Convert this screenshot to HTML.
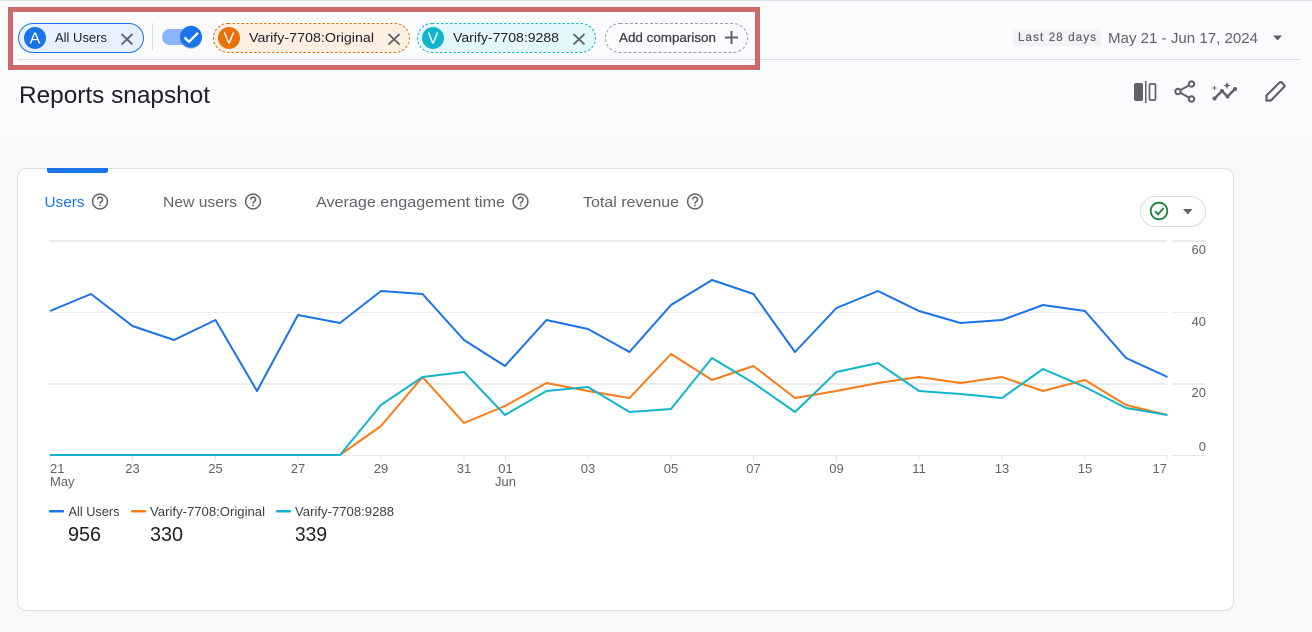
<!DOCTYPE html>
<html><head><meta charset="utf-8"><title>Reports snapshot</title>
<style>
html,body{margin:0;padding:0;width:1312px;height:632px;overflow:hidden;background:#f8f9fb}
svg{display:block;position:absolute;left:0;top:0}
text{font-family:"Liberation Sans",sans-serif}
.ax{fill:#5f6368}
.ax text{font-size:13px}
.lg{font-size:12.500px;fill:#3c4043}
.num{font-size:20px;fill:#202124}
.tab{font-size:15px;fill:#5f6368}
.chip{font-size:13px;fill:#202124}
.av{font-size:16px;fill:#fff;text-anchor:middle}
</style></head><body>
<svg width="1312" height="632" viewBox="0 0 1312 632" xmlns="http://www.w3.org/2000/svg">
<defs><linearGradient id="bg" x1="0" y1="0" x2="0" y2="1"><stop offset="0" stop-color="#fafbfd"/><stop offset="0.2" stop-color="#fafbfd"/><stop offset="0.26" stop-color="#f7f8fa"/><stop offset="1" stop-color="#f7f8fa"/></linearGradient></defs>
<rect width="1312" height="632" fill="url(#bg)"/>
<rect x="0" y="0" width="1312" height="1" fill="#dfe1e5"/>
<line x1="18" y1="59.500" x2="1300" y2="59.500" stroke="#dadce0"/>
<rect x="10.500" y="9.500" width="747" height="58" fill="none" stroke="#cc6a6a" stroke-width="5"/>

<!-- All Users chip -->
<rect x="18.500" y="23.500" width="125" height="29" rx="14.500" fill="#e8f0fe" stroke="#1a73e8"/>
<circle cx="35" cy="38" r="11" fill="#1a73e8"/>
<text class="av" x="35" y="43.500">A</text>
<text class="chip" x="55" y="42" textLength="52" lengthAdjust="spacingAndGlyphs">All Users</text>
<path d="M121.500 34L132.500 44.500M132.500 34L121.500 44.500" stroke="#5f6368" stroke-width="1.900" fill="none"/>
<line x1="152.500" y1="23" x2="152.500" y2="50" stroke="#dadce0"/>
<!-- toggle -->
<rect x="162" y="29" width="26" height="16" rx="8" fill="#8ab4f8"/>
<circle cx="191" cy="38" r="11" fill="#000" opacity=".18"/>
<circle cx="191" cy="36.800" r="11" fill="#1a73e8"/>
<path d="M184.500 37.500L189 41.800L198 32.800" stroke="#fff" stroke-width="2.300" fill="none"/>
<!-- Original chip -->
<rect x="213.500" y="23.500" width="196" height="29" rx="14.500" fill="#feefe3" stroke="#e8710a" stroke-dasharray="2.500 2"/>
<circle cx="229" cy="38" r="11" fill="#e8710a"/>
<text class="av" x="229" y="43.500">V</text>
<text class="chip" x="249" y="42" textLength="125" lengthAdjust="spacingAndGlyphs">Varify-7708:Original</text>
<path d="M388.500 34L399.500 44.500M399.500 34L388.500 44.500" stroke="#5f6368" stroke-width="1.900" fill="none"/>
<!-- 9288 chip -->
<rect x="417.500" y="23.500" width="178" height="29" rx="14.500" fill="#e4f7fb" stroke="#12b5cb" stroke-dasharray="2.500 2"/>
<circle cx="433" cy="38" r="11" fill="#12b5cb"/>
<text class="av" x="433" y="43.500">V</text>
<text class="chip" x="453" y="42" textLength="106" lengthAdjust="spacingAndGlyphs">Varify-7708:9288</text>
<path d="M573.500 34L584.500 44.500M584.500 34L573.500 44.500" stroke="#5f6368" stroke-width="1.900" fill="none"/>
<!-- add comparison -->
<rect x="605.500" y="23.500" width="142" height="29" rx="14.500" fill="none" stroke="#9aa0a6" stroke-dasharray="3 2"/>
<text class="chip" x="619" y="42" style="font-size:13px;fill:#3c4043;stroke:#3c4043;stroke-width:.25" textLength="97" lengthAdjust="spacingAndGlyphs">Add comparison</text>
<path d="M731.500 31V44M725 37.500H738" stroke="#5f6368" stroke-width="2" fill="none"/>

<!-- date -->
<rect x="1013" y="29" width="88" height="17" fill="#f1f3f4"/>
<text x="1018" y="41" style="font-size:11.500px;fill:#5f6368;stroke:#5f6368;stroke-width:.2" textLength="78" lengthAdjust="spacing">Last 28 days</text>
<text x="1108" y="43" style="font-size:15px;fill:#5f6368" textLength="150" lengthAdjust="spacingAndGlyphs">May 21 - Jun 17, 2024</text>
<path d="M1273 35.500H1282L1277.500 40.500Z" fill="#5f6368"/>

<text x="19" y="103" style="font-size:24px;fill:#202124" textLength="191" lengthAdjust="spacingAndGlyphs">Reports snapshot</text>

<!-- top right icons -->
<rect x="1134" y="83" width="9" height="18" rx="2" fill="#5f6368"/>
<rect x="1145" y="81" width="1.500" height="22" fill="#5f6368"/>
<rect x="1149.500" y="84" width="6" height="16" rx="1" fill="none" stroke="#5f6368" stroke-width="1.700"/>
<path d="M1178 91.500L1191.500 84M1178 91.500L1191.500 99" stroke="#5f6368" stroke-width="2" fill="none"/>
<circle cx="1178" cy="91.500" r="2.700" fill="#f9fafc" stroke="#5f6368" stroke-width="2.200"/>
<circle cx="1191.500" cy="84" r="2.700" fill="#f9fafc" stroke="#5f6368" stroke-width="2.200"/>
<circle cx="1191.500" cy="99" r="2.700" fill="#f9fafc" stroke="#5f6368" stroke-width="2.200"/>
<path d="M1214.500 98.500L1222 91L1227.500 96.500L1235 89" stroke="#5f6368" stroke-width="2.400" fill="none"/>
<circle cx="1214.500" cy="98.500" r="2" fill="#5f6368"/><circle cx="1222" cy="91" r="2" fill="#5f6368"/><circle cx="1227.500" cy="96.500" r="2" fill="#5f6368"/><circle cx="1235" cy="89" r="2" fill="#5f6368"/>
<path d="M1227 82L1228 84.500L1230.500 85.500L1228 86.500L1227 89L1226 86.500L1223.500 85.500L1226 84.500Z" fill="#5f6368"/>
<path d="M1214.500 86V90M1212.500 88H1216.500" stroke="#5f6368" stroke-width=".9" fill="none"/>
<path d="M1266.500 100.500V95.500L1279.500 82.500Q1280.500 81.500 1281.800 82.500L1284 84.800Q1285 86 1284 87L1271 100.500Z" fill="none" stroke="#5f6368" stroke-width="2.200"/>

<!-- card -->
<rect x="17.500" y="168.500" width="1216" height="442" rx="9" fill="#fff" stroke="#dadce0"/>
<path d="M47 168H108V170.500Q108 173 105.500 173H49.500Q47 173 47 170.500Z" fill="#1a73e8"/>
<text class="tab" x="44.500" y="207" style="fill:#1a73e8" textLength="40" lengthAdjust="spacingAndGlyphs">Users</text>
<text class="tab" x="163" y="207" textLength="74" lengthAdjust="spacingAndGlyphs">New users</text>
<text class="tab" x="316" y="207" textLength="189" lengthAdjust="spacingAndGlyphs">Average engagement time</text>
<text class="tab" x="583" y="207" textLength="96" lengthAdjust="spacingAndGlyphs">Total revenue</text>
<g fill="none" stroke="#5f6368" stroke-width="1.500">
<circle cx="100" cy="201.500" r="7.400"/><circle cx="253" cy="201.500" r="7.400"/><circle cx="520.500" cy="201.500" r="7.400"/><circle cx="695" cy="201.500" r="7.400"/>
<path d="M97.700 199.500A2.400 2.400 0 1 1 101.300 201.600C100.300 202.200 100 202.700 100 203.800"/>
<path d="M250.700 199.500A2.400 2.400 0 1 1 254.300 201.600C253.300 202.200 253 202.700 253 203.800"/>
<path d="M518.200 199.500A2.400 2.400 0 1 1 521.800 201.600C520.800 202.200 520.500 202.700 520.500 203.800"/>
<path d="M692.700 199.500A2.400 2.400 0 1 1 696.300 201.600C695.300 202.200 695 202.700 695 203.800"/>
</g>
<g fill="#5f6368"><circle cx="100" cy="205.500" r=".9"/><circle cx="253" cy="205.500" r=".9"/><circle cx="520.500" cy="205.500" r=".9"/><circle cx="695" cy="205.500" r=".9"/></g>
<!-- status pill -->
<rect x="1140.500" y="196.500" width="65" height="30" rx="15" fill="#fff" stroke="#dadce0"/>
<circle cx="1159" cy="211" r="8.300" fill="none" stroke="#188038" stroke-width="1.800"/>
<path d="M1155 211.300L1158 214.300L1163.500 208" fill="none" stroke="#188038" stroke-width="1.800"/>
<path d="M1183 209H1192.500L1187.800 214.500Z" fill="#5f6368"/>

<!-- grid -->
<g stroke="#ebebeb" stroke-width="2" fill="none">
<path d="M49 241H1167M1172 241H1205"/>
<path d="M49 312.500H1167M1172 312.500H1205" stroke-width="1"/>
<path d="M49 384H1167M1172 384H1205"/>
</g>
<path d="M49 455.500H1167M1172 455.500H1205" stroke="#e3e5e8" fill="none"/>
<path d="M50 456V461M132.500 456V461M215.500 456V461M298 456V461M381 456V461M464 456V461M505.500 456V461M588 456V461M671 456V461M753.500 456V461M836.500 456V461M919 456V461M1002 456V461M1085 456V461M1167 456V461" stroke="#e3e5e8" fill="none"/>

<!-- series -->
<polyline fill="none" stroke="#1a73e8" stroke-width="2" stroke-linejoin="round" points="50,311 91,294 132.500,326 174,340 215.500,320 257,391 298,315 340,323 381,291 422.500,294 464,340 505,366 546.500,320 588,329 629.500,352 671,305 712,280 753.500,294 795,352 836.500,308 878,291 919,311 960.500,323 1002,320 1043,305 1085,311 1126,358 1167.500,377"/>
<polyline fill="none" stroke="#fa7b17" stroke-width="2" stroke-linejoin="round" points="50,455 340,455 381,426 422.500,377 464,423 505,406 546.500,383 588,391 629.500,398 671,354 712,380 753.500,366 795,398 836.500,391 878,383 919,377 960.500,383 1002,377 1043,391 1085,380 1126,405 1167.500,415"/>
<polyline fill="none" stroke="#12b5cb" stroke-width="2" stroke-linejoin="round" points="50,455 340,455 381,405 422.500,377 464,372 505,415 546.500,391 588,387 629.500,412 671,409 712,358 753.500,383 795,412 836.500,372 878,363 919,391 960.500,394 1002,398 1043,369 1085,387 1126,408 1167.500,415"/>

<!-- axis labels -->
<g class="ax">
<text x="1206" y="254" text-anchor="end">60</text>
<text x="1206" y="326" text-anchor="end">40</text>
<text x="1206" y="397" text-anchor="end">20</text>
<text x="1206" y="451" text-anchor="end">0</text>
<text x="50" y="473">21</text>
<text x="50" y="486">May</text>
<text x="132.500" y="473" text-anchor="middle">23</text>
<text x="215.500" y="473" text-anchor="middle">25</text>
<text x="298" y="473" text-anchor="middle">27</text>
<text x="381" y="473" text-anchor="middle">29</text>
<text x="464" y="473" text-anchor="middle">31</text>
<text x="505.500" y="473" text-anchor="middle">01</text>
<text x="505.500" y="486" text-anchor="middle">Jun</text>
<text x="588" y="473" text-anchor="middle">03</text>
<text x="671" y="473" text-anchor="middle">05</text>
<text x="753.500" y="473" text-anchor="middle">07</text>
<text x="836.500" y="473" text-anchor="middle">09</text>
<text x="919" y="473" text-anchor="middle">11</text>
<text x="1002" y="473" text-anchor="middle">13</text>
<text x="1085" y="473" text-anchor="middle">15</text>
<text x="1167" y="473" text-anchor="end">17</text>
</g>

<!-- legend -->
<rect x="49" y="510" width="15" height="2.500" rx="1" fill="#1a73e8"/>
<text class="lg" x="68.500" y="516" textLength="51" lengthAdjust="spacingAndGlyphs">All Users</text>
<rect x="131" y="510" width="15" height="2.500" rx="1" fill="#fa7b17"/>
<text class="lg" x="150" y="516" textLength="115" lengthAdjust="spacingAndGlyphs">Varify-7708:Original</text>
<rect x="276" y="510" width="15" height="2.500" rx="1" fill="#12b5cb"/>
<text class="lg" x="295" y="516" textLength="99" lengthAdjust="spacingAndGlyphs">Varify-7708:9288</text>
<text class="num" x="68" y="541" textLength="33" lengthAdjust="spacingAndGlyphs">956</text>
<text class="num" x="150" y="541" textLength="33" lengthAdjust="spacingAndGlyphs">330</text>
<text class="num" x="295" y="541" textLength="32" lengthAdjust="spacingAndGlyphs">339</text>
</svg>
</body></html>
